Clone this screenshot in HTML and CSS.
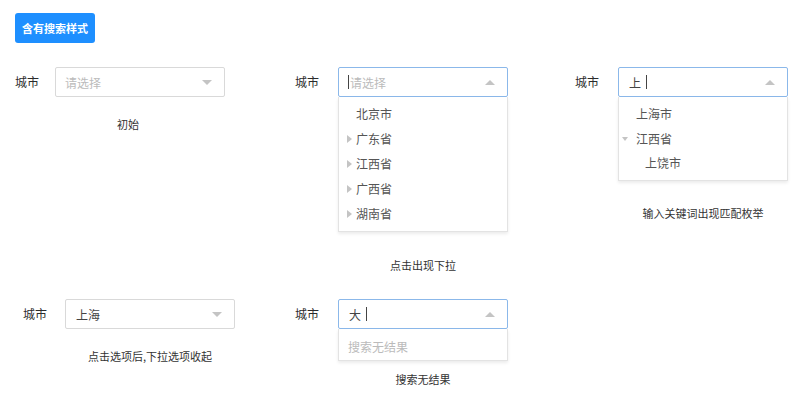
FILE: index.html
```html
<!DOCTYPE html>
<html lang="zh">
<head>
<meta charset="utf-8">
<link rel="stylesheet" href="styles.css">
</head>
<body>
<button class="btn">含有搜索样式</button>

<div class="row row-1">
  <div class="demo">
    <div class="field">
      <span class="label label-40">城市</span>
      <div class="select">
        <span class="value placeholder">请选择</span>
        <span class="caret caret-down"></span>
      </div>
    </div>
    <div class="caption caption-first">初始</div>
  </div>

  <div class="demo">
    <div class="field">
      <span class="label">城市</span>
      <div class="box">
        <div class="select focus">
          <span class="value"><span class="cursor"></span><span class="placeholder">请选择</span></span>
          <span class="caret caret-up"></span>
        </div>
        <ul class="menu menu-tall">
          <li class="item leaf">北京市</li>
          <li class="item"><span class="arr arr-right"></span>广东省</li>
          <li class="item"><span class="arr arr-right"></span>江西省</li>
          <li class="item"><span class="arr arr-right"></span>广西省</li>
          <li class="item"><span class="arr arr-right"></span>湖南省</li>
        </ul>
      </div>
    </div>
    <div class="caption caption-2">点击出现下拉</div>
  </div>

  <div class="demo">
    <div class="field">
      <span class="label">城市</span>
      <div class="box">
        <div class="select focus">
          <span class="value text">上<span class="cursor cursor-after"></span></span>
          <span class="caret caret-up"></span>
        </div>
        <ul class="menu menu-match">
          <li class="item leaf">上海市</li>
          <li class="item item-open"><span class="arr arr-down"></span>江西省</li>
          <li class="item sub">上饶市</li>
        </ul>
      </div>
    </div>
    <div class="caption caption-3">输入关键词出现匹配枚举</div>
  </div>
</div>

<div class="row row-2">
  <div class="demo demo-shift">
    <div class="field">
      <span class="label label-42">城市</span>
      <div class="select">
        <span class="value text">上海</span>
        <span class="caret caret-down"></span>
      </div>
    </div>
    <div class="caption caption-4">点击选项后,下拉选项收起</div>
  </div>

  <div class="demo">
    <div class="field">
      <span class="label">城市</span>
      <div class="box">
        <div class="select focus">
          <span class="value text">大<span class="cursor cursor-after"></span></span>
          <span class="caret caret-up"></span>
        </div>
        <ul class="menu menu-empty">
          <li class="item empty">搜索无结果</li>
        </ul>
      </div>
    </div>
    <div class="caption caption-5">搜索无结果</div>
  </div>
</div>
</body>
</html>
```

FILE: styles.css
```css
* { box-sizing: border-box; }

html, body {
  margin: 0;
  padding: 0;
  background: #ffffff;
}

body {
  font-family: "Noto Sans CJK SC", "Noto Sans", "Liberation Sans", sans-serif;
  font-size: 12px;
  color: #333333;
  padding: 13px 0 0 15px;
}

.btn {
  display: block;
  width: 80px;
  height: 30px;
  padding: 0;
  border: none;
  border-radius: 3px;
  background: #1e8fff;
  color: #ffffff;
  font-family: inherit;
  font-size: 11px;
  font-weight: 700;
}

.row {
  display: grid;
  grid-template-columns: 280px 280px 215px;
  align-items: start;
}

.row-1 { margin-top: 24px; }
.row-2 { margin-top: 25px; }

.demo-shift { margin-left: 8px; }

.field {
  display: flex;
  align-items: flex-start;
}

.label {
  width: 43px;
  flex: none;
  height: 30px;
  line-height: 30px;
  font-size: 12px;
  color: #2b2b2b;
}

.label-40 { width: 40px; }
.label-42 { width: 42px; }

.box {
  width: 170px;
  flex: none;
}

.select {
  width: 170px;
  height: 30px;
  flex: none;
  border: 1px solid #d9d9d9;
  border-radius: 2px;
  display: flex;
  align-items: center;
  justify-content: space-between;
  padding: 0 12px 0 9px;
  background: #fff;
}

.select.focus {
  border-color: #8bb8ea;
}

.value {
  display: flex;
  align-items: center;
  font-size: 12px;
  color: #444444;
}

.value.text { padding-left: 1px; }

.placeholder {
  color: #bbbbbb;
  font-size: 12px;
}

.cursor {
  display: inline-block;
  width: 1px;
  height: 14px;
  background: #444444;
  margin-right: 1px;
}

.cursor-after { margin-left: 5px; }

.caret {
  width: 0;
  height: 0;
  border-left: 5px solid transparent;
  border-right: 5px solid transparent;
}

.caret-down { border-top: 5px solid #c4c4c4; }
.caret-up { border-bottom: 5px solid #c4c4c4; }

.menu {
  list-style: none;
  margin: 0;
  padding: 4px 0 5px;
  border: 1px solid #e3e3e3;
  border-top: none;
  box-shadow: 0 2px 3px rgba(0, 0, 0, 0.08);
  background: #fff;
}

.menu-match { padding-bottom: 7px; }
.menu-empty { padding: 5px 0 1px; }

.item {
  height: 25px;
  display: flex;
  align-items: center;
  padding-left: 8px;
  color: #555555;
  font-size: 12px;
}

.item.leaf { padding-left: 17px; }
.item.item-open { padding-left: 3px; }
.item.sub { padding-left: 26px; height: 22px; }
.item.empty { padding-left: 9px; color: #bbbbbb; }

.arr {
  width: 9px;
  flex: none;
  display: flex;
  align-items: center;
}

.arr-right::before {
  content: "";
  width: 0;
  height: 0;
  border-top: 4px solid transparent;
  border-bottom: 4px solid transparent;
  border-left: 5px solid #c4c4c4;
}

.arr-down { width: 14px; }

.arr-down::before {
  content: "";
  width: 0;
  height: 0;
  border-left: 3.5px solid transparent;
  border-right: 3.5px solid transparent;
  border-top: 4px solid #c4c4c4;
}

.caption {
  width: 170px;
  margin-left: 43px;
  text-align: center;
  font-size: 11px;
  line-height: 18px;
  color: #333333;
}

.caption-first { margin-left: 40px; padding-right: 24px; margin-top: 18px; }
.caption-2 { margin-top: 24px; }
.caption-3 { margin-top: 23px; }
.caption-4 { margin-left: 42px; margin-top: 18px; }
.caption-5 { margin-top: 9px; }
```
